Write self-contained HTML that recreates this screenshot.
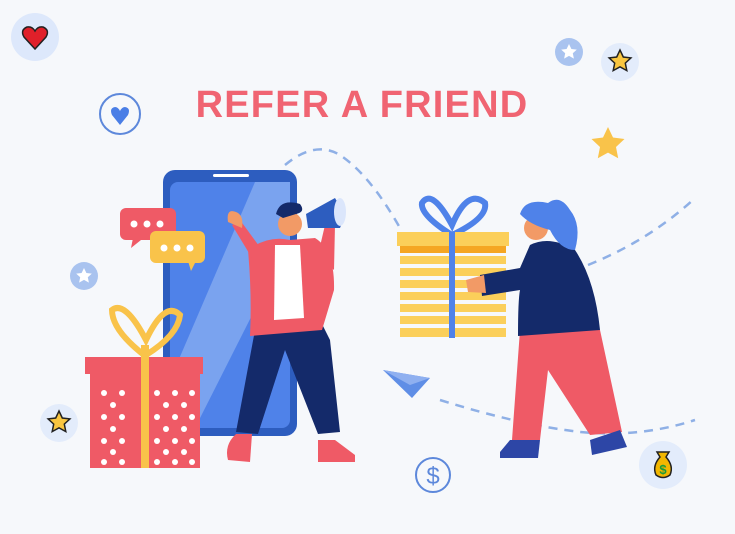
<!DOCTYPE html>
<html><head><style>
html,body{margin:0;padding:0;background:#f6f8fb;}
svg{display:block}
</style></head><body>
<svg width="735" height="534" viewBox="0 0 735 534" xmlns="http://www.w3.org/2000/svg">
<rect width="735" height="534" fill="#f6f8fb"/>
<g fill="none" stroke="#8fb0e6" stroke-width="2.5" stroke-dasharray="9 7">
<path d="M285 165 Q315 140 340 155 Q370 175 400 228"/>
<path d="M588 265 Q650 240 695 198"/>
<path d="M440 400 Q520 425 580 432 Q640 438 695 420"/>
</g>
<ellipse cx="35" cy="37" rx="24" ry="24" fill="#dde8fb"/>
<path d="M35 49 L24 37 Q20 30 27 27 Q32 26 35 31 Q38 26 43 27 Q50 30 46 37 Z" fill="#e0202a" stroke="#222" stroke-width="1.5"/>
<circle cx="120" cy="114" r="20" fill="none" stroke="#5d88db" stroke-width="2"/>
<path d="M120 125 L112 115 Q109 108 115 107 Q118 107 120 111 Q122 107 125 107 Q131 108 128 115 Z" fill="#4a7ee6"/>
<circle cx="569" cy="52" r="14" fill="#a9c3ef"/>
<path d="M569 44 l2.4 5 5.4.6-4 3.7 1.1 5.3-4.9-2.7-4.9 2.7 1.1-5.3-4-3.7 5.4-.6z" fill="#fff"/>
<circle cx="620" cy="62" r="19" fill="#e3ecfb"/>
<path d="M620 50 l3.3 7 7.6.9-5.6 5.2 1.5 7.5-6.8-3.8-6.8 3.8 1.5-7.5-5.6-5.2 7.6-.9z" fill="#f9c640" stroke="#222" stroke-width="1.5"/>
<path d="M608 127 l5 10.5 11.5 1.5-8.5 8 2.2 11.3-10.2-5.7-10.2 5.7 2.2-11.3-8.5-8 11.5-1.5z" fill="#f9c34a"/>
<circle cx="84" cy="276" r="14" fill="#a9c3ef"/>
<path d="M84 268 l2.4 5 5.4.6-4 3.7 1.1 5.3-4.9-2.7-4.9 2.7 1.1-5.3-4-3.7 5.4-.6z" fill="#fff"/>
<circle cx="59" cy="423" r="19" fill="#e3ecfb"/>
<path d="M59 411 l3.3 7 7.6.9-5.6 5.2 1.5 7.5-6.8-3.8-6.8 3.8 1.5-7.5-5.6-5.2 7.6-.9z" fill="#f9c640" stroke="#222" stroke-width="1.5"/>
<circle cx="433" cy="475" r="17" fill="none" stroke="#5d88db" stroke-width="2"/>
<text x="433" y="484" font-family="Liberation Sans, sans-serif" font-size="24" fill="#5d88db" text-anchor="middle">$</text>
<ellipse cx="663" cy="465" rx="24" ry="24" fill="#e3ecfb"/>
<path d="M657 452 h12 l-3 5 Q674 466 670 475 Q663 480 656 475 Q652 466 660 457 Z" fill="#f2b600" stroke="#222" stroke-width="1.5"/>
<text x="663" y="474" font-family="Liberation Sans, sans-serif" font-size="13" font-weight="bold" fill="#1a9a3a" text-anchor="middle">$</text>
<text x="362" y="117" font-family="Liberation Sans, sans-serif" font-weight="bold" font-size="38" fill="#f06472" text-anchor="middle" letter-spacing="1.2">REFER A FRIEND</text>
<rect x="163" y="170" width="134" height="266" rx="12" fill="#2d5dbf"/>
<rect x="170" y="182" width="120" height="246" rx="8" fill="#4f82e9"/>
<path d="M255 182 L290 182 L290 240 L195 428 L170 428 L170 380 Z" fill="#7aa3ef"/>
<rect x="213" y="174" width="36" height="3" rx="1.5" fill="#fff"/>
<rect x="120" y="208" width="56" height="32" rx="6" fill="#ef5a66"/>
<path d="M133 238 l-2 10 10-8z" fill="#ef5a66"/>
<rect x="150" y="231" width="55" height="32" rx="6" fill="#f9c34a"/>
<path d="M188 261 l3 10 5-10z" fill="#f9c34a"/>
<g fill="#fff"><circle cx="134" cy="224" r="3.5"/><circle cx="147" cy="224" r="3.5"/><circle cx="160" cy="224" r="3.5"/>
<circle cx="164" cy="248" r="3.5"/><circle cx="177" cy="248" r="3.5"/><circle cx="190" cy="248" r="3.5"/></g>
<path d="M144 355 Q112 330 112 310 Q125 300 146 340 Q165 300 180 315 Q178 335 146 355" fill="none" stroke="#f9c34a" stroke-width="6"/>
<rect x="85" y="357" width="118" height="17" fill="#ef5a66"/>
<rect x="90" y="374" width="110" height="94" fill="#ef5a66"/>
<g fill="#fff">
<circle cx="104" cy="393" r="3"/><circle cx="122" cy="393" r="3"/><circle cx="157" cy="393" r="3"/><circle cx="175" cy="393" r="3"/><circle cx="192" cy="393" r="3"/>
<circle cx="104" cy="417" r="3"/><circle cx="122" cy="417" r="3"/><circle cx="157" cy="417" r="3"/><circle cx="175" cy="417" r="3"/><circle cx="192" cy="417" r="3"/>
<circle cx="104" cy="441" r="3"/><circle cx="122" cy="441" r="3"/><circle cx="157" cy="441" r="3"/><circle cx="175" cy="441" r="3"/><circle cx="192" cy="441" r="3"/>
<circle cx="104" cy="462" r="3"/><circle cx="122" cy="462" r="3"/><circle cx="157" cy="462" r="3"/><circle cx="175" cy="462" r="3"/><circle cx="192" cy="462" r="3"/>
<circle cx="113" cy="405" r="3"/><circle cx="166" cy="405" r="3"/><circle cx="184" cy="405" r="3"/><circle cx="113" cy="429" r="3"/><circle cx="166" cy="429" r="3"/><circle cx="184" cy="429" r="3"/><circle cx="113" cy="452" r="3"/><circle cx="166" cy="452" r="3"/><circle cx="184" cy="452" r="3"/>
</g>
<rect x="141" y="345" width="8" height="123" fill="#f9c34a"/>
<path d="M255 330 L236 432 L258 434 L285 350 L318 434 L340 432 L330 340 L320 320 Z" fill="#142a6a"/>
<path d="M228 460 Q224 445 236 434 L252 434 L250 462 Z" fill="#ef5a66"/>
<path d="M318 440 L335 440 L355 455 L355 462 L318 462 Z" fill="#ef5a66"/>
<path d="M248 250 Q268 235 290 240 L315 238 Q335 250 334 290 L322 330 L250 336 Q252 295 248 250 Z" fill="#ef5a66"/>
<path d="M275 245 L300 245 L304 318 L274 320 Z" fill="#fff"/>
<path d="M252 258 L232 225 L240 220 L262 250 Z" fill="#ef5a66"/>
<path d="M228 222 Q226 208 236 212 Q244 215 242 228 Z" fill="#f29a66"/>
<path d="M318 255 L325 225 L335 225 L334 270 Z" fill="#ef5a66"/>
<circle cx="290" cy="224" r="12" fill="#f29a66"/>
<path d="M276 214 Q280 198 300 204 Q306 212 296 214 L283 218 Z" fill="#142a6a"/>
<path d="M306 214 L335 198 L345 215 L340 228 L308 228 Z" fill="#2d5dbf"/>
<ellipse cx="340" cy="212" rx="6" ry="14" fill="#dbe6fb"/>
<path d="M452 235 Q420 215 422 203 Q432 188 452 225 Q468 188 485 203 Q488 218 452 235" fill="none" stroke="#4f82e9" stroke-width="6"/>
<rect x="397" y="232" width="112" height="14" fill="#fbcf5a"/>
<rect x="400" y="246" width="106" height="7" fill="#f5a623"/>
<g fill="#fbcf5a">
<rect x="400" y="256" width="106" height="8"/><rect x="400" y="268" width="106" height="8"/><rect x="400" y="280" width="106" height="8"/>
<rect x="400" y="292" width="106" height="8"/><rect x="400" y="304" width="106" height="8"/><rect x="400" y="316" width="106" height="8"/><rect x="400" y="328" width="106" height="9"/>
</g>
<rect x="449" y="232" width="6" height="106" fill="#4f82e9"/>
<path d="M520 330 L512 440 L540 440 L548 370 L590 435 L622 432 L600 330 Z" fill="#ef5a66"/>
<path d="M500 452 L510 440 L540 440 L538 458 L500 458 Z" fill="#2d46a6"/>
<path d="M590 440 L620 430 L627 447 L592 455 Z" fill="#2d46a6"/>
<path d="M530 245 Q550 235 575 250 Q595 280 600 330 L518 336 Q518 300 520 290 L482 296 L480 275 L520 268 Z" fill="#142a6a"/>
<path d="M466 280 L484 275 L486 293 L468 292 Z" fill="#f29a66"/>
<circle cx="536" cy="228" r="12" fill="#f29a66"/>
<path d="M520 214 Q525 198 548 203 Q560 194 570 210 Q582 225 575 250 Q560 250 550 230 Q530 225 520 214 Z" fill="#4f82e9"/>
<path d="M383 370 L430 378 L412 398 Z" fill="#5f8ee6"/>
<path d="M383 370 L430 378 L410 385 Z" fill="#8fb0f0"/>
</svg>
</body></html>
